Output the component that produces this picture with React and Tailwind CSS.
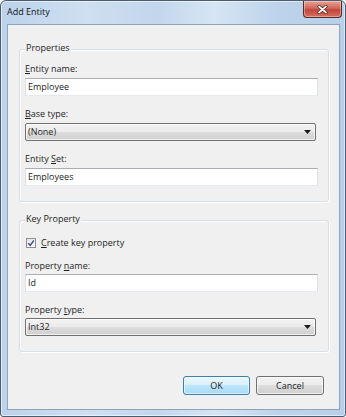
import React from "react";

function U({ children }) {
  return <span className="underline underline-offset-[1px]">{children}</span>;
}

function Group({ label, className = "", children }) {
  return (
    <div
      className={`relative ml-[11px] w-[310px] rounded-[3px] border border-[#d5dfe5] shadow-[inset_1px_1px_0_#ffffff,1px_1px_0_#ffffff] ${className}`}
    >
      <div className="absolute left-[5px] top-[-8px] bg-[#f0f0f0] px-[1px] leading-[12px] text-[#1e1e1e]">
        {label}
      </div>
      {children}
    </div>
  );
}

function Label({ children, className = "" }) {
  return <div className={`h-[12px] leading-[12px] text-[#1e1e1e] ${className}`}>{children}</div>;
}

function TextBox({ value, className = "" }) {
  return (
    <div
      className={`ml-[5px] flex h-[18px] w-[293px] items-center border border-t-[#abadb3] border-x-[#dbdfe6] border-b-[#e3e9ef] bg-white pl-[2px] leading-[12px] text-[#1e1e1e] ${className}`}
    >
      {value}
    </div>
  );
}

function Combo({ value, className = "" }) {
  return (
    <div
      className={`ml-[5px] flex h-[18px] w-[291px] items-center justify-between rounded-[2px] border border-[#707070] bg-[linear-gradient(#f2f2f2,#ebebeb_50%,#dddddd_50%,#cfcfcf)] pl-[2px] pr-[4px] leading-[12px] text-[#1e1e1e] shadow-[inset_0_0_0_1px_rgba(255,255,255,0.7)] ${className}`}
    >
      <span>{value}</span>
      <svg width="7" height="4" viewBox="0 0 7 4">
        <path d="M0 0 L7 0 L3.5 4 Z" fill="#1a1a1a" />
      </svg>
    </div>
  );
}

export default function App() {
  return (
    <div className="h-[417px] w-[346px] bg-white font-['Open_Sans',sans-serif] text-[9px]">
      <div className="flex h-[417px] w-[346px] flex-col rounded-t-[6px] rounded-b-[3px] border border-[#4d5b6e] bg-[linear-gradient(90deg,#bcd2ea,#cfdff1_25%,#c2d6ec_45%,#d6e5f4_62%,#bdd3eb_80%,#b8cfe9)] shadow-[inset_0_0_0_1px_rgba(255,255,255,0.55)]">
        <div className="flex h-[23px] items-start justify-between pl-[6px] pr-[3px]">
          <div className="mt-[5px] leading-[12px] text-[#111]">Add Entity</div>
          <div className="flex h-[17px] w-[39px] items-center justify-center rounded-b-[4px] border border-t-0 border-[#5a2a25] bg-[linear-gradient(#e8a395,#d0685a_45%,#c2453a_55%,#d5705f)] shadow-[inset_0_0_0_1px_rgba(255,255,255,0.35)]">
            <svg width="11" height="9" viewBox="0 0 11 9">
              <path d="M2 1.5 L9 7.5 M9 1.5 L2 7.5" stroke="#4a1f1a" strokeWidth="3.2" strokeLinecap="round" />
              <path d="M2 1.5 L9 7.5 M9 1.5 L2 7.5" stroke="#ffffff" strokeWidth="1.7" strokeLinecap="round" />
            </svg>
          </div>
        </div>
        <div className="ml-[6px] flex h-[386px] w-[333px] flex-col border border-[#8fa3bb] bg-[#f0f0f0]">
          <Group label="Properties" className="mt-[24px] pb-[15px] pt-[13px]">
            <Label className="ml-[5px]">
              <U>E</U>ntity name:
            </Label>
            <TextBox value="Employee" className="mt-[3px]" />
            <Label className="ml-[5px] mt-[12px]">
              <U>B</U>ase type:
            </Label>
            <Combo value="(None)" className="mt-[3px]" />
            <Label className="ml-[5px] mt-[12px]">
              Entity <U>S</U>et:
            </Label>
            <TextBox value="Employees" className="mt-[3px]" />
          </Group>

          <Group label="Key Property" className="mt-[18px] pb-[15px] pt-[16px]">
            <div className="ml-[6px] flex h-[12px] items-center gap-[5px]">
              <div className="flex h-[10px] w-[10px] items-center justify-center border border-[#8f8f8f] bg-[linear-gradient(135deg,#e4e4e4,#fbfbfb)]">
                <svg width="8" height="8" viewBox="0 0 8 8">
                  <path d="M1.3 4.2 L3.2 6.3 L6.8 1.5" stroke="#3b4f86" strokeWidth="1.4" fill="none" />
                </svg>
              </div>
              <span className="leading-[12px] text-[#1e1e1e]">
                <U>C</U>reate key property
              </span>
            </div>
            <Label className="ml-[5px] mt-[11px]">
              Property <U>n</U>ame:
            </Label>
            <TextBox value="Id" className="mt-[2px]" />
            <Label className="ml-[5px] mt-[12px]">
              Property <U>t</U>ype:
            </Label>
            <Combo value="Int32" className="mt-[2px]" />
          </Group>

          <div className="mt-[24px] flex justify-end gap-[6px] pr-[15px]">
            <div className="flex h-[19px] w-[67px] items-center justify-center rounded-[3px] border border-[#3c7fb1] bg-[linear-gradient(#eaf6fd,#d9f0fc_50%,#bee6fd_50%,#a7d9f5)] leading-[12px] text-[#1e1e1e] shadow-[inset_0_0_0_1px_rgba(255,255,255,0.6)]">
              OK
            </div>
            <div className="flex h-[19px] w-[68px] items-center justify-center rounded-[3px] border border-[#707070] bg-[linear-gradient(#f2f2f2,#ebebeb_50%,#dddddd_50%,#cfcfcf)] leading-[12px] text-[#1e1e1e] shadow-[inset_0_0_0_1px_rgba(255,255,255,0.7)]">
              Cancel
            </div>
          </div>
        </div>
      </div>
    </div>
  );
}
